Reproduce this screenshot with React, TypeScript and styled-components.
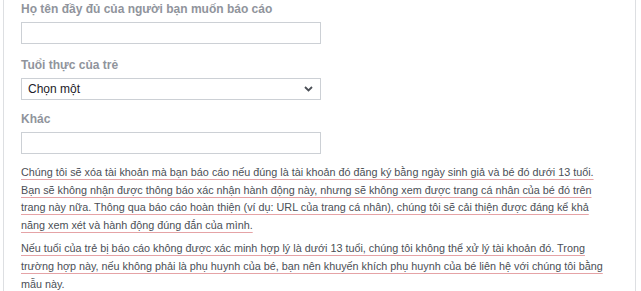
import { createGlobalStyle } from 'styled-components'
import styled from 'styled-components'

const GlobalStyle = createGlobalStyle`
  body {
    margin: 0;
    background: #fff;
    font-family: "Liberation Sans", Arial, sans-serif;
  }
`

const Panel = styled.div`
  margin-left: 3px;
  width: 633px;
  min-height: 291px;
  box-sizing: border-box;
  border-left: 1px solid #dddfe2;
  border-right: 1px solid #dddfe2;
  padding: 0 24px 0 17px;
`

const Label = styled.div<{ $top: number }>`
  margin-top: ${(p) => p.$top}px;
  font-size: 12px;
  line-height: 18px;
  font-weight: bold;
  color: #90949c;
`

const TextInput = styled.input`
  display: block;
  box-sizing: border-box;
  width: 300px;
  height: 22px;
  margin-top: 4px;
  border: 1px solid #ccd0d5;
  outline: none;
  padding: 0 6px;
  font-family: inherit;
  font-size: 12px;
`

const SelectWrap = styled.div`
  position: relative;
  width: 300px;
  margin-top: 4px;
`

const Select = styled.select`
  display: block;
  box-sizing: border-box;
  width: 300px;
  height: 22px;
  border: 1px solid #ccd0d5;
  border-radius: 0;
  background: #fff;
  appearance: none;
  padding: 0 6px;
  font-family: inherit;
  font-size: 12px;
  color: #1d2129;
  outline: none;
`

const Chevron = styled.svg`
  position: absolute;
  right: 8px;
  top: 8px;
  pointer-events: none;
`

const Notice = styled.p<{ $top: number }>`
  margin: ${(p) => p.$top}px 0 0;
  font-size: 10.8px;
  line-height: 17.6px;
  color: #4b4f56;
  text-decoration: underline;
  text-decoration-color: #e5a3a6;
  text-underline-offset: 3px;
`

export default function App() {
  return (
    <>
      <GlobalStyle />
      <Panel>
        <Label $top={0}>Họ tên đầy đủ của người bạn muốn báo cáo</Label>
        <TextInput type='text' />
        <Label $top={12}>Tuổi thực của trẻ</Label>
        <SelectWrap>
          <Select defaultValue=''>
            <option value=''>Chọn một</option>
          </Select>
          <Chevron width='9' height='6' viewBox='0 0 9 6'>
            <path d='M1 1 L4.5 4.5 L8 1' fill='none' stroke='#4b4f56' strokeWidth='1.8' />
          </Chevron>
        </SelectWrap>
        <Label $top={10}>Khác</Label>
        <TextInput type='text' />
        <Notice $top={10}>
          Chúng tôi sẽ xóa tài khoản mà bạn báo cáo nếu đúng là tài khoản đó đăng ký bằng ngày sinh giả và bé đó dưới 13 tuổi. Bạn sẽ không nhận được thông báo xác nhận hành động này, nhưng sẽ không xem được trang cá nhân của bé đó trên trang này nữa. Thông qua báo cáo hoàn thiện (ví dụ: URL của trang cá nhân), chúng tôi sẽ cải thiện được đáng kể khả năng xem xét và hành động đúng đắn của mình.
        </Notice>
        <Notice $top={6}>
          Nếu tuổi của trẻ bị báo cáo không được xác minh hợp lý là dưới 13 tuổi, chúng tôi không thể xử lý tài khoản đó. Trong trường hợp này, nếu không phải là phụ huynh của bé, bạn nên khuyến khích phụ huynh của bé liên hệ với chúng tôi bằng mẫu này.
        </Notice>
      </Panel>
    </>
  )
}
